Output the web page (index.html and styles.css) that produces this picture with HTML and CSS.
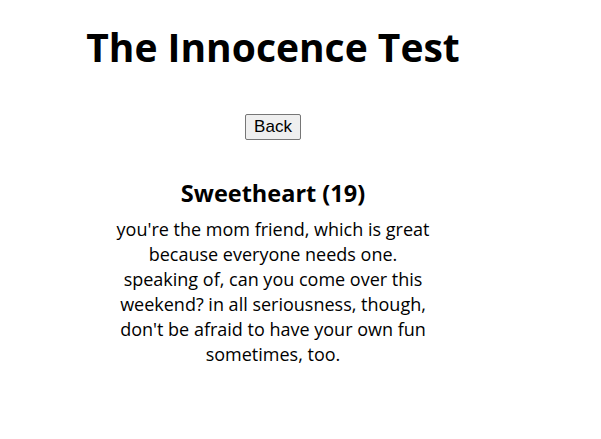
FILE: index.html
```html
<!DOCTYPE html>
<html>
<head>
<meta charset="utf-8">
<link rel="stylesheet" href="styles.css">
</head>
<body>
<div class="page">
  <h1 class="title">The Innocence Test</h1>
  <div class="actions"><button class="back">Back</button></div>
  <h2 class="result">Sweetheart (19)</h2>
  <p class="desc">you're the mom friend, which is great because everyone needs one. speaking of, can you come over this weekend? in all seriousness, though, don't be afraid to have your own fun sometimes, too.</p>
</div>
</body>
</html>
```
FILE: styles.css
```css
body {
  margin: 8px;
  font-family: "Open Sans", "Noto Sans", sans-serif;
  color: #000;
  background: #fff;
}
.page {
  width: 530px;
  text-align: center;
}
.title {
  font-size: 39px;
  font-weight: 700;
  margin: 12px 0 0;
  line-height: 54px;
}
.actions {
  margin-top: 40px;
}
.back {
  font-family: "Liberation Sans", Arial, sans-serif;
  font-size: 17px;
  padding: 2px 8px;
  background: #efefef;
  border: 1px solid #767676;
  border-radius: 2px;
  color: #000;
}
.result {
  font-size: 23.5px;
  font-weight: 700;
  margin: 37px 0 0;
  line-height: 32px;
}
.desc {
  font-size: 18px;
  line-height: 25px;
  max-width: 318px;
  margin: 8px auto 0;
}
```
